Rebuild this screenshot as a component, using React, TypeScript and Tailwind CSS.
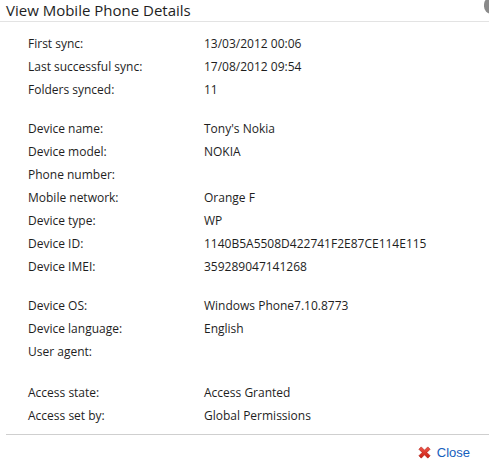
import React from 'react'

type Row = [string, string]

const groups: Row[][] = [
  [
    ['First sync:', '13/03/2012 00:06'],
    ['Last successful sync:', '17/08/2012 09:54'],
    ['Folders synced:', '11'],
  ],
  [
    ['Device name:', "Tony's Nokia"],
    ['Device model:', 'NOKIA'],
    ['Phone number:', ''],
    ['Mobile network:', 'Orange F'],
    ['Device type:', 'WP'],
    ['Device ID:', '1140B5A5508D422741F2E87CE114E115'],
    ['Device IMEI:', '359289047141268'],
  ],
  [
    ['Device OS:', 'Windows Phone7.10.8773'],
    ['Device language:', 'English'],
    ['User agent:', ''],
  ],
  [
    ['Access state:', 'Access Granted'],
    ['Access set by:', 'Global Permissions'],
  ],
]

function CloseIcon() {
  return (
    <svg width="15" height="15" viewBox="0 0 16 16" className="block">
      <defs>
        <linearGradient id="xg" x1="0" y1="0" x2="0" y2="1">
          <stop offset="0" stopColor="#f2564a" />
          <stop offset="1" stopColor="#c81e12" />
        </linearGradient>
      </defs>
      <path
        d="M2 4.5 L4.5 2 L8 5.5 L11.5 2 L14 4.5 L10.5 8 L14 11.5 L11.5 14 L8 10.5 L4.5 14 L2 11.5 L5.5 8 Z"
        fill="url(#xg)"
        stroke="#a8160c"
        strokeWidth="0.6"
        strokeLinejoin="round"
      />
    </svg>
  )
}

export default function App() {
  return (
    <div
      className="relative h-[467px] w-[489px] overflow-hidden bg-white text-[#1e1e1e]"
      style={{ fontFamily: '"Open Sans", "Noto Sans", sans-serif' }}
    >
      <div className="h-[22px] border-b border-[#e3e3e3] pl-[6px] text-[15px] leading-[20px] text-[#1e1e1e]">
        View Mobile Phone Details
      </div>
      <div className="absolute right-[-10px] top-[-3px] h-[17px] w-[15px] rounded-full bg-[#8a8a8a]" />

      <div className="px-[28px] pt-[10px] text-[12px]">
        {groups.map((g, i) => (
          <div key={i} className={i === 2 ? 'mb-[18px]' : 'mb-4'}>
            {g.map(([label, value]) => (
              <div key={label} className="flex h-[23px] items-center">
                <span className="w-[176px] shrink-0">{label}</span>
                <span>{value}</span>
              </div>
            ))}
          </div>
        ))}
      </div>

      <div className="absolute bottom-0 left-[6px] right-0 top-[434px] border-t border-[#cfcfcf]">
        <div className="flex justify-end pr-[19px] pt-[8px]">
          <button
            className="flex items-center gap-[5px] text-[13px] text-[#1560bd]"
            style={{ fontFamily: '"Liberation Sans", Arial, sans-serif' }}
          >
            <CloseIcon />
            Close
          </button>
        </div>
      </div>
    </div>
  )
}
